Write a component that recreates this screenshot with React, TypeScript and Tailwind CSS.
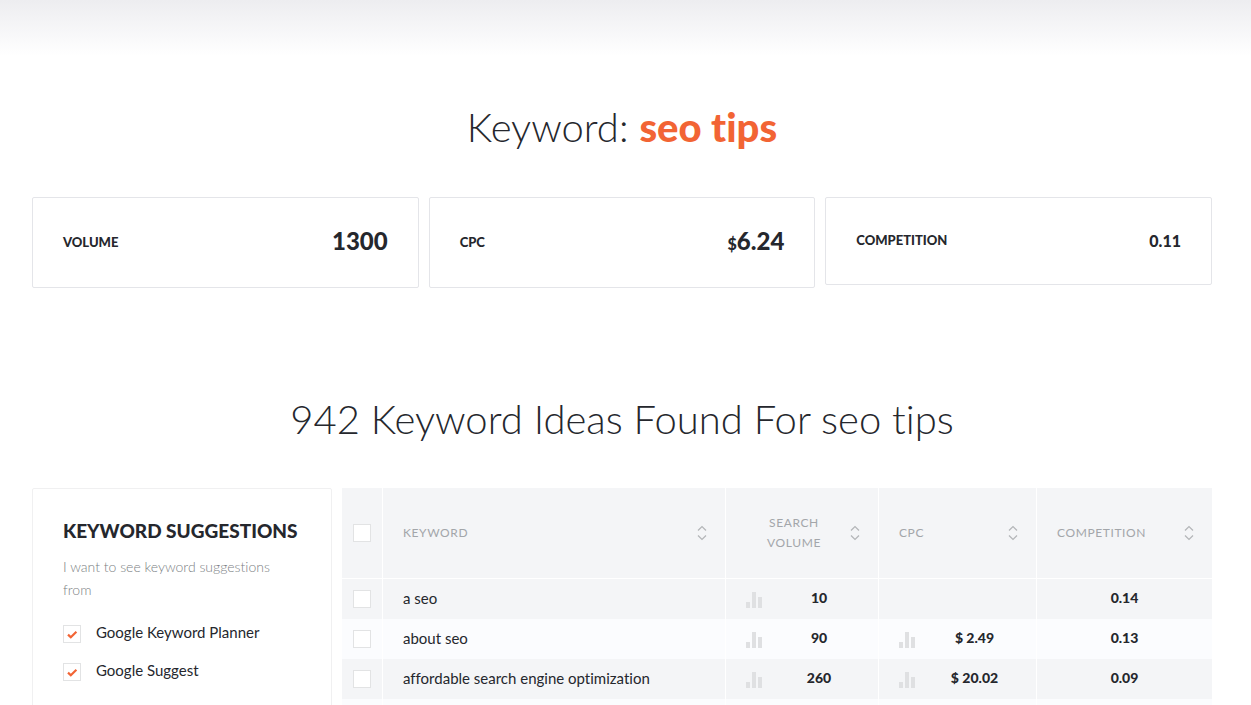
import type { InputHTMLAttributes, ReactNode } from "react";

type Row = { keyword: string; volume: string; cpc?: string; competition: string };

const rows: Row[] = [
  { keyword: "a seo", volume: "10", competition: "0.14" },
  { keyword: "about seo", volume: "90", cpc: "$ 2.49", competition: "0.13" },
  { keyword: "affordable search engine optimization", volume: "260", cpc: "$ 20.02", competition: "0.09" },
];

function Tick(props: InputHTMLAttributes<HTMLInputElement>) {
  return (
    <span className="grid size-[18px] shrink-0">
      <input
        type="checkbox"
        {...props}
        className="peer col-start-1 row-start-1 m-0 size-[18px] appearance-none border border-[#e2e3e4] bg-white"
      />
      <svg
        viewBox="0 0 18 18"
        className="pointer-events-none invisible col-start-1 row-start-1 size-[18px] peer-checked:visible"
        aria-hidden="true"
      >
        <path d="M5 9.6 L7.8 12.2 L13.4 6.8" fill="none" stroke="#f26434" strokeWidth="2.2" />
      </svg>
    </span>
  );
}

function SortIcon() {
  return (
    <svg viewBox="0 0 10 16" className="h-4 w-[10px]" fill="none" stroke="#b3b5b8" strokeWidth="1.2" aria-hidden="true">
      <path d="M1 5.5 L5 1.5 L9 5.5" />
      <path d="M1 10.5 L5 14.5 L9 10.5" />
    </svg>
  );
}

function BarsIcon() {
  return (
    <svg viewBox="0 0 16 16" className="size-4 shrink-0" fill="#dfe0e2" aria-hidden="true">
      <rect x="0" y="10" width="4" height="6" />
      <rect x="6" y="0" width="4" height="16" />
      <rect x="12" y="5" width="4" height="11" />
    </svg>
  );
}

function HeadCell({ label, center }: { label: string; center?: boolean }) {
  return (
    <th scope="col" className="border-b border-l border-white bg-[#f4f5f7] p-0 font-normal">
      <button
        type="button"
        className="flex w-full items-center gap-2 pr-[18px] pl-5 text-xs leading-5 tracking-wider text-[#a3a6aa] uppercase"
      >
        <span className={center ? "flex-1 px-2 text-center" : "flex-1 text-left"}>{label}</span>
        <SortIcon />
      </button>
    </th>
  );
}

function Metric({ value }: { value?: string }) {
  return (
    <td className="border-l border-white p-0 pb-[2px]">
      {value && (
        <div className="flex items-center pr-[2px] pl-5">
          <span className="pt-1">
            <BarsIcon />
          </span>
          <span className="flex-1 text-center text-sm font-black">{value}</span>
        </div>
      )}
    </td>
  );
}

function Stat({ label, children, compact }: { label: string; children: ReactNode; compact?: boolean }) {
  return (
    <div
      className={
        compact
          ? "flex h-[88px] items-center justify-between rounded-xs border border-[#e4e5e9] px-[30px]"
          : "flex h-[91px] items-center justify-between rounded-xs border border-[#e4e5e9] px-[30px]"
      }
    >
      <h3 className="text-[13px] font-black uppercase">{label}</h3>
      <p className={compact ? "font-black" : "pb-1 font-black"}>{children}</p>
    </div>
  );
}

export default function App() {
  return (
    <div className="h-screen overflow-hidden bg-white font-['Lato',sans-serif] text-[#25272d] [font-variant-ligatures:none]">
      <div className="h-14 bg-linear-to-b from-[#ededf0] to-white" />
      <main className="pr-[39px] pl-8">
        <h1 className="pt-[41px] text-center text-[40px] leading-[60px] font-light">
          Keyword: <strong className="font-black text-[#f26434]">seo tips</strong>
        </h1>
        <section className="mt-10 grid grid-cols-3 items-start gap-[10px]">
          <Stat label="Volume">
            <span className="text-2xl">1300</span>
          </Stat>
          <Stat label="CPC">
            <span className="text-base">$</span>
            <span className="text-2xl">6.24</span>
          </Stat>
          <Stat label="Competition" compact>
            <span className="text-base">0.11</span>
          </Stat>
        </section>
        <h2 className="pt-[101px] text-center text-[40px] leading-[60px] font-light">
          942 Keyword Ideas Found For seo tips
        </h2>
        <div className="mt-[39px] flex items-start gap-[10px]">
          <aside className="h-80 w-[300px] shrink-0 rounded-xs border border-[#f0f0f1] px-[30px] pt-7">
            <h3 className="text-[19px] leading-7 font-black whitespace-nowrap uppercase">Keyword Suggestions</h3>
            <p className="mt-[10px] text-sm leading-[23px] font-light text-[#7c7f84]">
              I want to see keyword suggestions from
            </p>
            <ul className="mt-[21px]">
              {["Google Keyword Planner", "Google Suggest"].map((name) => (
                <li key={name} className="h-[38px]">
                  <label className="flex items-center gap-[15px] text-[15px] leading-5">
                    <Tick defaultChecked />
                    <span className="pb-1">{name}</span>
                  </label>
                </li>
              ))}
            </ul>
          </aside>
          <table className="min-w-0 flex-1 table-fixed border-separate border-spacing-0">
            <colgroup>
              <col className="w-10" />
              <col />
              <col className="w-[153px]" />
              <col className="w-[158px]" />
              <col className="w-[176px]" />
            </colgroup>
            <thead>
              <tr className="h-[91px]">
                <th className="border-b border-white bg-[#f4f5f7] p-0">
                  <div className="flex justify-center">
                    <Tick aria-label="Select all keywords" />
                  </div>
                </th>
                <HeadCell label="Keyword" />
                <HeadCell label="Search Volume" center />
                <HeadCell label="CPC" />
                <HeadCell label="Competition" />
              </tr>
            </thead>
            <tbody>
              {rows.map((r) => (
                <tr key={r.keyword} className="h-10 odd:bg-[#f4f5f7] even:bg-[#fbfcfe]">
                  <td className="p-0">
                    <div className="flex justify-center">
                      <Tick aria-label={r.keyword} />
                    </div>
                  </td>
                  <td className="border-l border-white px-5 pt-0 pb-[2px] text-[15px]">{r.keyword}</td>
                  <Metric value={r.volume} />
                  <Metric value={r.cpc} />
                  <td className="border-l border-white p-0 pb-[2px] text-center text-sm font-black">{r.competition}</td>
                </tr>
              ))}
              <tr className="h-10 bg-[#fbfcfe]">
                <td />
                <td className="border-l border-white" />
                <td className="border-l border-white" />
                <td className="border-l border-white" />
                <td className="border-l border-white" />
              </tr>
            </tbody>
          </table>
        </div>
      </main>
    </div>
  );
}
